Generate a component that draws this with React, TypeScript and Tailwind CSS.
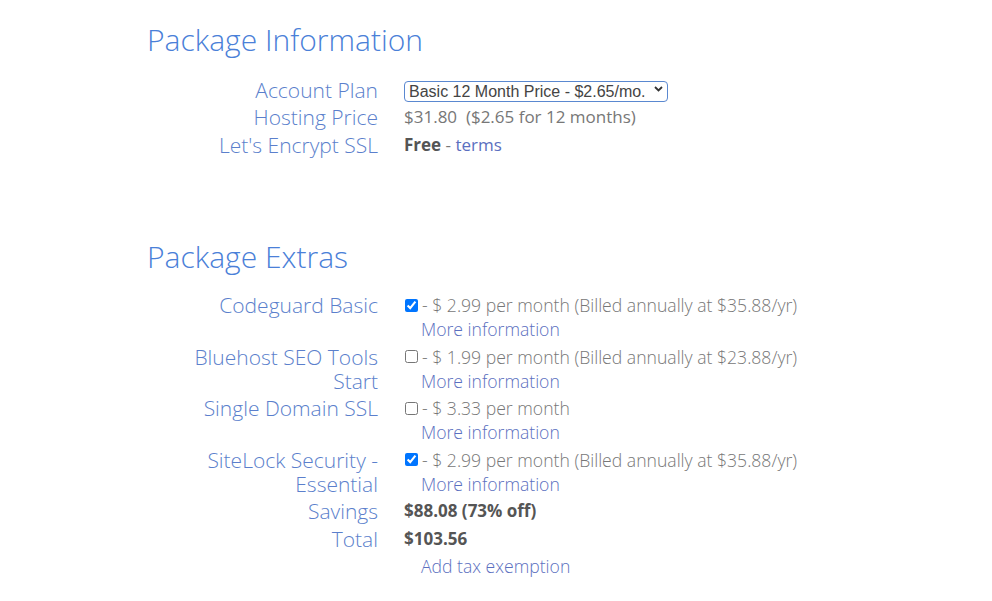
import React from 'react'

const label = 'text-right text-[21px] font-light text-[#5b7fcc] leading-[24px]'
const value = 'text-[17px] text-[#777] leading-[24px]'
const link = 'text-[#5b6fc0]'

function Row({ name, children }: { name: React.ReactNode; children: React.ReactNode }) {
  return (
    <div className="grid grid-cols-[231px_1fr] gap-x-[26px] py-[1.75px]">
      <div className={label}>{name}</div>
      <div className={value}>{children}</div>
    </div>
  )
}

function Extra({ name, price, checked }: { name: React.ReactNode; price: string; checked?: boolean }) {
  return (
    <Row name={name}>
      <div className="flex items-center gap-[4px] h-[24px] font-light text-[17.6px]">
        <input type="checkbox" defaultChecked={checked} className="w-[13px] h-[13px] m-0 ml-[1px]" />
        <span>- {price}</span>
      </div>
      <div className="pl-[17px] h-[24px] font-light text-[17.6px]">
        <a className={link} href="#">More information</a>
      </div>
    </Row>
  )
}

// small chevron like the browser's native select arrow
const Chevron = () => (
  <svg className="absolute right-[5px] top-[7px] w-[9px] h-[6px] pointer-events-none" viewBox="0 0 9 6" fill="none">
    <path d="M1 1l3.5 3.5L8 1" stroke="#333" strokeWidth={1.8} />
  </svg>
)

export default function App() {
  return (
    <div className="min-h-screen bg-white font-['Open_Sans',sans-serif] pl-[147px] pt-[18px]">
      <h2 className="text-[30px] font-light text-[#4a80d8] leading-[44px]">Package Information</h2>
      <div className="mt-[14px]">
        <Row name="Account Plan">
          <div className="relative w-[264px] h-[21px] mt-[1px]">
            <select className="appearance-none w-full h-full border border-[#5a88d0] rounded-[4px] text-[16px] leading-[19px] text-[#444] font-['Liberation_Sans',sans-serif] pl-[4px] pr-[16px]">
              <option>Basic 12 Month Price - $2.65/mo.</option>
            </select>
            <Chevron />
          </div>
        </Row>
        <Row name="Hosting Price">$31.80&nbsp; ($2.65 for 12 months)</Row>
        <Row name="Let's Encrypt SSL">
          <b className="font-bold text-[#555]">Free</b> - <a className={link} href="#">terms</a>
        </Row>
      </div>

      <h2 className="mt-[76px] text-[30px] font-light text-[#4a80d8] leading-[44px]">Package Extras</h2>
      <div className="mt-[13px]">
        <Extra name="Codeguard Basic" price="$ 2.99 per month (Billed annually at $35.88/yr)" checked />
        <Extra name={<>Bluehost SEO Tools<br />Start</>} price="$ 1.99 per month (Billed annually at $23.88/yr)" />
        <Extra name="Single Domain SSL" price="$ 3.33 per month" />
        <Extra name={<>SiteLock Security -<br />Essential</>} price="$ 2.99 per month (Billed annually at $35.88/yr)" checked />
        <Row name="Savings"><b className="font-bold text-[#555]">$88.08 (73% off)</b></Row>
        <Row name="Total"><b className="font-bold text-[#555]">$103.56</b></Row>
        <Row name="">
          <div className="pl-[17px] h-[24px] font-light text-[17.6px]">
            <a className={link} href="#">Add tax exemption</a>
          </div>
        </Row>
      </div>
    </div>
  )
}
